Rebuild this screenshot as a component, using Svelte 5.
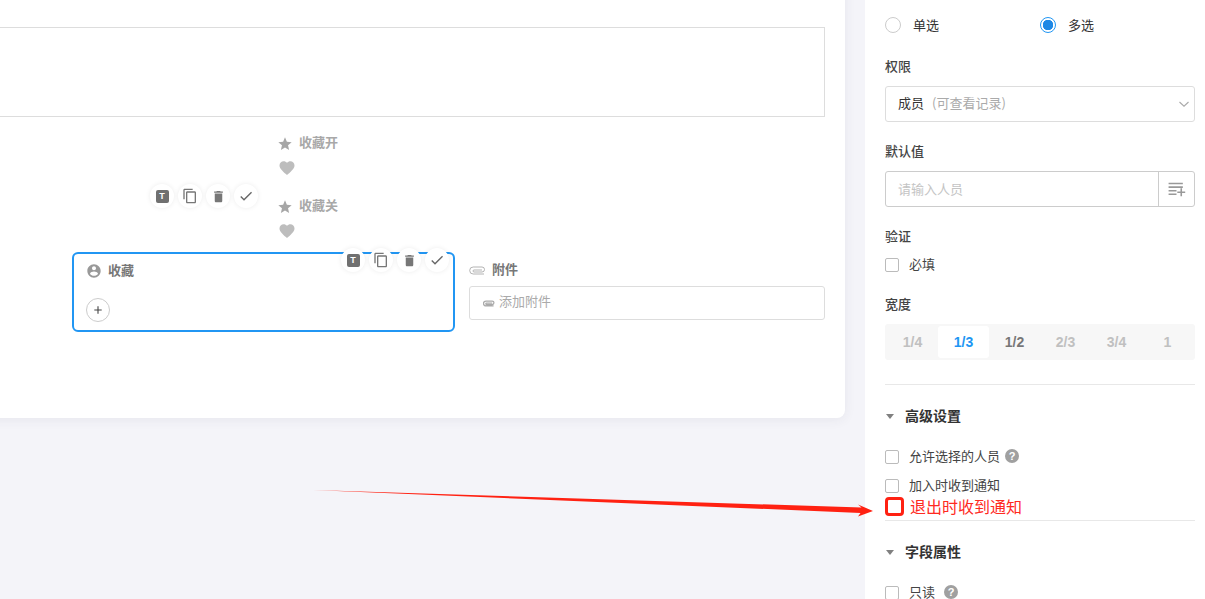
<script>
  const tools = ["text", "copy", "trash", "check"];
  const favs = ["收藏开", "收藏关"];
  const widths = ["1/4", "1/3", "1/2", "2/3", "3/4", "1"];
</script>

{#snippet toolbar(cls)}
  <div class="toolbar {cls}">
    {#each tools as t}
      <span class="tool">
        {#if t === "text"}
          <span class="t-icon">T</span>
        {:else if t === "copy"}
          <svg width="16" height="16" viewBox="0 0 24 24" fill="#777"><path d="M16 1H4c-1.100 0-2 .9-2 2v14h2V3h12V1zm3 4H8c-1.100 0-2 .9-2 2v14c0 1.100.9 2 2 2h11c1.100 0 2-.9 2-2V7c0-1.100-.9-2-2-2zm0 16H8V7h11v14z"/></svg>
        {:else if t === "trash"}
          <svg width="15" height="15" viewBox="0 0 24 24" fill="#777"><path d="M6 19c0 1.100.9 2 2 2h8c1.100 0 2-.9 2-2V7H6v12zM19 4h-3.500l-1-1h-5l-1 1H5v2h14V4z"/></svg>
        {:else}
          <svg width="16" height="16" viewBox="0 0 24 24" fill="#666"><path d="M9 16.200 4.800 12l-1.400 1.400L9 19 21 7l-1.400-1.400z"/></svg>
        {/if}
      </span>
    {/each}
  </div>
{/snippet}

{#snippet help()}
  <span class="help">?</span>
{/snippet}

<div class="app">
  <main class="canvas">
    <section class="card">
      <div class="text-box"></div>

      <div class="favs">
        {@render toolbar("tb-fav")}
        {#each favs as f}
          <div class="fav">
            <div class="fav-label">
              <svg width="16" height="16" viewBox="0 0 24 24" fill="#a6a6a6"><path d="M12 17.270 18.180 21l-1.640-7.030L22 9.240l-7.190-.61L12 2 9.190 8.630 2 9.240l5.460 4.730L5.820 21z"/></svg>
              <span class="lift">{f}</span>
            </div>
            <svg class="heart" width="18" height="18" viewBox="0 0 24 24" fill="#bdbdbd"><path d="m12 21.350-1.450-1.320C5.400 15.360 2 12.280 2 8.500 2 5.420 4.420 3 7.500 3c1.740 0 3.410.81 4.500 2.090C13.090 3.810 14.760 3 16.500 3 19.580 3 22 5.420 22 8.500c0 3.780-3.400 6.860-8.550 11.540L12 21.350z"/></svg>
          </div>
        {/each}
      </div>

      <div class="field-row">
        <div class="member">
          {@render toolbar("tb-member")}
          <div class="field-label">
            <svg width="16" height="16" viewBox="0 0 24 24" fill="#999"><path d="M12 2C6.480 2 2 6.480 2 12s4.480 10 10 10 10-4.480 10-10S17.520 2 12 2zm0 3c1.660 0 3 1.340 3 3s-1.340 3-3 3-3-1.340-3-3 1.340-3 3-3zm0 14.200c-2.500 0-4.710-1.280-6-3.220.03-1.990 4-3.080 6-3.080 1.990 0 5.970 1.090 6 3.080-1.290 1.940-3.500 3.220-6 3.220z"/></svg>
            <span class="lift">收藏</span>
          </div>
          <button class="add" aria-label="添加">
            <svg width="12" height="12" viewBox="0 0 12 12"><path d="M6 2.300v7.400M2.300 6h7.400" stroke="#444" stroke-width="1.100" fill="none"/></svg>
          </button>
        </div>
        <div class="attach">
          <div class="field-label">
            <svg width="17" height="9" viewBox="0 0 17 9"><path d="M15 8H4.200A3.500 3.500 0 0 1 4.200 1H13a2.500 2.500 0 0 1 0 5H5a1 1 0 0 1 0-2H13" stroke="#aaa" stroke-width=".9" fill="none"/></svg>
            <span class="lift">附件</span>
          </div>
          <div class="attach-input">
            <svg width="12" height="7" viewBox="0 0 17 9"><path d="M15 8H4.200A3.500 3.500 0 0 1 4.200 1H13a2.500 2.500 0 0 1 0 5H5a1 1 0 0 1 0-2H13" stroke="#aaa" stroke-width="1.800" fill="none"/></svg>
            <span class="lift-more">添加附件</span>
          </div>
        </div>
      </div>
    </section>
  </main>

  <aside class="panel">
    <div class="radios">
      <label class="radio-item"><span class="radio"></span><span class="txt">单选</span></label>
      <label class="radio-item"><span class="radio on"></span><span class="txt">多选</span></label>
    </div>

    <h4 class="title t-perm">权限</h4>
    <div class="select">
      <span class="lift">成员<span class="hint">(可查看记录)</span></span>
      <svg class="chev" width="12" height="12" viewBox="0 0 12 12"><path d="M1.500 4 6 8.200 10.500 4" stroke="#aaa" stroke-width="1.100" fill="none"/></svg>
    </div>

    <h4 class="title t-default">默认值</h4>
    <div class="input-group">
      <span class="placeholder txt">请输入人员</span>
      <span class="addon">
        <svg width="19" height="19" viewBox="0 0 24 24" fill="#999"><path d="M2 3.500h18v2H2zM2 8h18v2H2zM2 12.500h10v2H2zM2 17h10v2H2zM17 10.500h2v4h4v2h-4v4h-2v-4h-4v-2h4z"/></svg>
      </span>
    </div>

    <h4 class="title t-verify">验证</h4>
    <label class="check c-required"><span class="box"></span><span class="lift">必填</span></label>

    <h4 class="title t-width">宽度</h4>
    <div class="segments">
      {#each widths as w, i}
        <span class="seg" class:active={i === 1} class:strong={i === 2}>{w}</span>
      {/each}
    </div>

    <hr class="rule r-first" />

    <div class="section-head"><i class="tri"></i><span class="txt">高级设置</span></div>
    <label class="check c-allow"><span class="box"></span><span class="lift">允许选择的人员</span>{@render help()}</label>
    <label class="check c-join"><span class="box"></span><span class="lift">加入时收到通知</span></label>
    <label class="check-red"><span class="box-red"></span><span class="txt">退出时收到通知</span></label>

    <hr class="rule r-second" />

    <div class="section-head"><i class="tri"></i><span class="txt">字段属性</span></div>
    <label class="check c-readonly"><span class="box"></span><span class="lift">只读</span>{@render help()}</label>
  </aside>

  <svg class="arrow" width="1205" height="599" viewBox="0 0 1205 599">
    <path d="M313 490 861.500 507.500 858 504.500 873 511 858 516.500 860.500 513 Z" fill="#ff2112"/>
  </svg>
</div>

<style>
  :global(body) {
    margin: 0;
    background: #f4f4f9;
  }

  .app {
    position: relative;
    display: flex;
    height: 599px;
    overflow: hidden;
    font-family: "Noto Sans CJK SC", "Liberation Sans", sans-serif;
    font-size: 13px;
    color: #333;
  }

  /* Noto sits lower in its line box than the original font, these pull it back up */
  .txt {
    padding-bottom: 2px;
  }

  .lift {
    padding-bottom: 4px;
  }

  .lift-more {
    padding-bottom: 6px;
  }

  .canvas {
    width: 865px;
    flex: none;
    background: #f4f4f9;
  }

  .card {
    box-sizing: border-box;
    width: 875px;
    height: 438px;
    margin: -20px 0 0 -30px;
    padding-top: 47px;
    background: #fff;
    border-radius: 8px;
    box-shadow: 0 2px 12px rgba(60, 60, 90, 0.07);
  }

  .text-box {
    box-sizing: border-box;
    height: 90px;
    margin-right: 20px;
    border: 1px solid #ddd;
  }

  .favs {
    position: relative;
    margin: 16px 0 0 308px;
    height: 119px;
  }

  .fav {
    height: 63px;
  }

  .fav-label {
    display: flex;
    align-items: center;
    gap: 6px;
    height: 20px;
    margin-left: -1px;
    font-weight: 700;
    color: #a8a8a8;
  }

  .fav-label svg {
    margin-top: 2px;
  }

  .heart {
    display: block;
    margin-top: 6px;
  }

  .toolbar {
    position: absolute;
    display: flex;
    gap: 4px;
  }

  .tb-fav {
    left: -128px;
    top: 51px;
  }

  .tb-member {
    right: 4px;
    top: -6px;
  }

  .tool {
    display: flex;
    align-items: center;
    justify-content: center;
    width: 24px;
    height: 24px;
    border-radius: 50%;
    background: #fff;
    box-shadow: 0 0 5px rgba(0, 0, 0, 0.08);
  }

  .t-icon {
    width: 13px;
    height: 13px;
    border-radius: 2px;
    background: #707070;
    color: #fff;
    font: 700 9px/13px "Liberation Sans", sans-serif;
    text-align: center;
  }

  .field-row {
    display: flex;
    gap: 14px;
    padding-left: 102px;
    padding-right: 20px;
  }

  .member {
    position: relative;
    box-sizing: border-box;
    width: 383px;
    height: 80px;
    padding: 7px 12px;
    border: 2px solid #2196f3;
    border-radius: 6px;
  }

  .field-label {
    display: flex;
    align-items: center;
    gap: 6px;
    height: 20px;
    font-weight: 700;
    color: #777;
  }

  .add {
    display: flex;
    align-items: center;
    justify-content: center;
    width: 24px;
    height: 24px;
    margin-top: 17px;
    padding: 0;
    border: 1px solid #ccc;
    border-radius: 50%;
    background: #fff;
  }

  .attach {
    flex: 1;
    padding-top: 8px;
  }

  .attach-input {
    box-sizing: border-box;
    display: flex;
    align-items: center;
    gap: 4px;
    height: 34px;
    margin-top: 6px;
    padding-left: 13px;
    border: 1px solid #ddd;
    border-radius: 3px;
    color: #aaa;
  }

  .panel {
    box-sizing: border-box;
    width: 340px;
    flex: none;
    padding: 15px 10px 0 20px;
    background: #fff;
    overflow: hidden;
  }

  .radios {
    display: flex;
    height: 20px;
  }

  .radio-item {
    display: flex;
    align-items: center;
    gap: 12px;
    width: 155px;
  }

  .radio {
    box-sizing: border-box;
    width: 16px;
    height: 16px;
    border: 1px solid #ccc;
    border-radius: 50%;
  }

  .radio.on {
    border-color: #2196f3;
    background: radial-gradient(circle, #1e88e5 0 5px, #fff 5.500px);
  }

  .title {
    margin: 0;
    height: 20px;
    font-size: 13px;
    font-weight: 500;
    line-height: 20px;
    color: #444;
  }

  .t-perm { margin-top: 21px; }
  .t-default { margin-top: 19px; }
  .t-verify { margin-top: 19px; }
  .t-width { margin-top: 19px; }

  .select {
    box-sizing: border-box;
    display: flex;
    align-items: center;
    height: 36px;
    margin-top: 10px;
    padding: 0 4px 0 12px;
    border: 1px solid #ddd;
    border-radius: 3px;
  }

  .hint {
    margin-left: 8px;
    color: #aaa;
  }

  .chev {
    margin-left: auto;
  }

  .input-group {
    box-sizing: border-box;
    display: flex;
    align-items: center;
    height: 36px;
    margin-top: 10px;
    padding-left: 12px;
    border: 1px solid #ccc;
    border-radius: 3px;
  }

  .placeholder {
    flex: 1;
    color: #c4c4c4;
  }

  .addon {
    display: flex;
    align-items: center;
    justify-content: center;
    width: 35px;
    height: 100%;
    border-left: 1px solid #ccc;
  }

  .check {
    display: flex;
    align-items: center;
    height: 20px;
    color: #444;
  }

  .box {
    box-sizing: border-box;
    width: 14px;
    height: 14px;
    margin-right: 10px;
    border: 1px solid #bbb;
    border-radius: 2px;
    background: #fff;
  }

  .c-required { margin-top: 9px; }
  .c-allow { margin-top: 21px; }
  .c-join { margin-top: 9px; }
  .c-readonly { margin-top: 21px; }

  .help {
    display: inline-block;
    width: 14px;
    height: 14px;
    margin: 0 0 3px 5px;
    border-radius: 50%;
    background: #a0a0a0;
    color: #fff;
    font: 700 11px/14px "Liberation Sans", sans-serif;
    text-align: center;
  }

  .c-readonly .help {
    margin-left: 9px;
  }

  .segments {
    display: flex;
    align-items: center;
    height: 36px;
    margin-top: 10px;
    padding: 0 2px;
    border-radius: 3px;
    background: #f7f7f7;
  }

  .seg {
    flex: 1;
    height: 32px;
    border-radius: 3px;
    font: 700 14px/32px "Liberation Sans", sans-serif;
    text-align: center;
    color: #c0c0c0;
  }

  .seg.active {
    background: #fff;
    color: #2196f3;
  }

  .seg.strong {
    color: #777;
  }

  .rule {
    height: 1px;
    margin: 0;
    border: 0;
    background: #e8e8e8;
  }

  .r-first { margin-top: 24px; }
  .r-second { margin-top: 3px; }

  .section-head {
    display: flex;
    align-items: center;
    gap: 11px;
    height: 20px;
    margin-top: 21px;
    font-size: 14px;
    font-weight: 700;
    color: #333;
  }

  .tri {
    width: 0;
    height: 0;
    margin-left: 1px;
    border: 4.500px solid transparent;
    border-top: 5px solid #808080;
    border-bottom: 0;
  }

  .check-red {
    display: flex;
    align-items: center;
    gap: 6px;
    height: 21px;
    font-size: 16px;
    color: #ff2a1f;
  }

  .box-red {
    box-sizing: border-box;
    width: 19px;
    height: 19px;
    border: 3px solid #ff2112;
    border-radius: 4px;
  }

  .arrow {
    position: absolute;
    inset: 0;
    pointer-events: none;
  }
</style>
